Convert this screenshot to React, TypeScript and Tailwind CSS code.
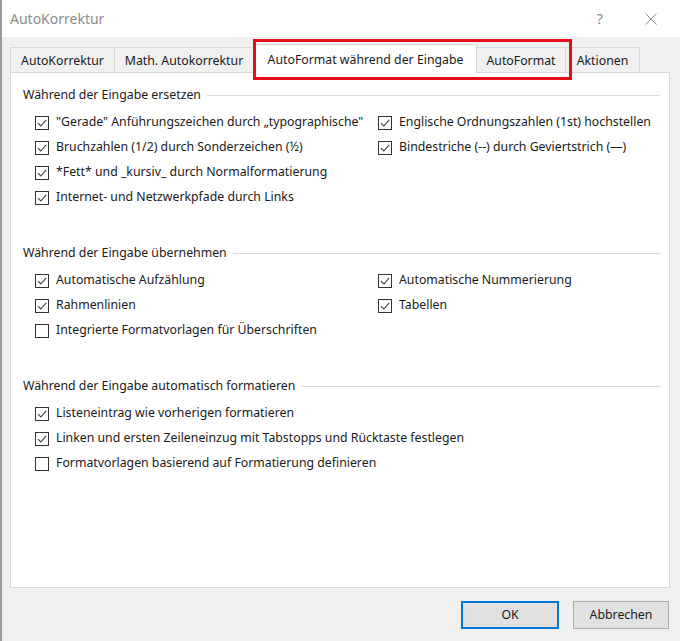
import React from 'react'

type Item = { label: string; checked: boolean }

const font = { fontFamily: '"Noto Sans", "Open Sans", Arial, sans-serif' }

const Check: React.FC<{ checked: boolean }> = ({ checked }) => (
  <span className="w-[14px] h-[14px] border border-[#333333] bg-white flex items-center justify-center shrink-0">
    {checked && (
      <svg width="12" height="12" viewBox="0 0 12 12" fill="none">
        <path d="M2 6.2 L4.8 9 L10.2 2.8" stroke="#3c3c3c" strokeWidth="1.1" />
      </svg>
    )}
  </span>
)

const Row: React.FC<Item> = ({ label, checked }) => (
  <div className="h-[25px] flex items-center gap-[7px] whitespace-nowrap">
    <Check checked={checked} />
    <span>{label}</span>
  </div>
)

const Section: React.FC<{ title: string; left: Item[]; right?: Item[] }> = ({ title, left, right = [] }) => (
  <div>
    <div className="flex items-center h-[16px] pl-[12px] pr-[9px]">
      <span className="whitespace-nowrap">{title}</span>
      <div className="flex-1 h-px bg-[#dcdcdc] ml-[6px]" />
    </div>
    <div className="grid grid-cols-[343px_1fr] pl-[24px] mt-[7px]">
      <div className="flex flex-col">
        {left.map((it) => (
          <Row key={it.label} {...it} />
        ))}
      </div>
      <div className="flex flex-col">
        {right.map((it) => (
          <Row key={it.label} {...it} />
        ))}
      </div>
    </div>
  </div>
)

const tabs = [
  { label: 'AutoKorrektur', w: 'w-[105px]' },
  { label: 'Math. Autokorrektur', w: 'w-[140px]' },
  { label: 'AutoFormat während der Eingabe', w: 'w-[223px]', active: true },
  { label: 'AutoFormat', w: 'w-[90px]' },
  { label: 'Aktionen', w: 'w-[75px]' },
]

export default function App() {
  return (
    <div
      className="w-[680px] h-[641px] bg-[#f0f0f0] border-l-2 border-[#9a9a9a] text-[12.3px] text-[#1a1a1a] flex flex-col relative overflow-hidden"
      style={font}
    >
      {/* Title bar */}
      <div className="h-[37px] bg-white flex items-center pl-[8px] shrink-0">
        <span className="text-[14px] text-[#8c8c8c]">AutoKorrektur</span>
        <span className="ml-auto text-[15px] text-[#8c8c8c] mr-[42px]">?</span>
        <svg width="12" height="12" viewBox="0 0 12 12" className="mr-[23px]">
          <path d="M0.5 0.5 L11.5 11.5 M11.5 0.5 L0.5 11.5" stroke="#8c8c8c" strokeWidth="1" />
        </svg>
      </div>

      {/* Tabs */}
      <div className="flex items-end h-[35px] pl-[8px] shrink-0 relative z-10">
        {tabs.map((t) =>
          t.active ? (
            <div
              key={t.label}
              className={`${t.w} h-[29px] bg-white border border-b-0 border-[#d9d9d9] flex items-center justify-center pt-[3px] -mb-px`}
            >
              {t.label}
            </div>
          ) : (
            <div
              key={t.label}
              className={`${t.w} h-[25px] bg-[#f0f0f0] border border-b-0 border-[#d9d9d9] -ml-px first:ml-0 flex items-center justify-center pt-[3px]`}
            >
              {t.label}
            </div>
          )
        )}
      </div>

      {/* Panel */}
      <div className="ml-[8px] mr-[10px] h-[516px] bg-white border border-[#d9d9d9] pt-[14px] flex flex-col gap-[35px]">
        <Section
          title="Während der Eingabe ersetzen"
          left={[
            { label: '"Gerade" Anführungszeichen durch „typographische"', checked: true },
            { label: 'Bruchzahlen (1/2) durch Sonderzeichen (½)', checked: true },
            { label: '*Fett* und _kursiv_ durch Normalformatierung', checked: true },
            { label: 'Internet- und Netzwerkpfade durch Links', checked: true },
          ]}
          right={[
            { label: 'Englische Ordnungszahlen (1st) hochstellen', checked: true },
            { label: 'Bindestriche (--) durch Geviertstrich (—)', checked: true },
          ]}
        />
        <Section
          title="Während der Eingabe übernehmen"
          left={[
            { label: 'Automatische Aufzählung', checked: true },
            { label: 'Rahmenlinien', checked: true },
            { label: 'Integrierte Formatvorlagen für Überschriften', checked: false },
          ]}
          right={[
            { label: 'Automatische Nummerierung', checked: true },
            { label: 'Tabellen', checked: true },
          ]}
        />
        <Section
          title="Während der Eingabe automatisch formatieren"
          left={[
            { label: 'Listeneintrag wie vorherigen formatieren', checked: true },
            { label: 'Linken und ersten Zeileneinzug mit Tabstopps und Rücktaste festlegen', checked: true },
            { label: 'Formatvorlagen basierend auf Formatierung definieren', checked: false },
          ]}
        />
      </div>

      {/* Buttons */}
      <div className="flex justify-end gap-[14px] pr-[11px] mt-[13px]">
        <button className="w-[98px] h-[28px] bg-[#e1e1e1] border-2 border-[#0078d7] flex items-center justify-center">
          OK
        </button>
        <button className="w-[96px] h-[28px] bg-[#e1e1e1] border border-[#adadad] flex items-center justify-center">
          Abbrechen
        </button>
      </div>

      {/* Highlight frame */}
      <div className="absolute left-[251px] top-[39px] w-[319px] h-[41px] border-[3px] border-[#e3101a] z-20 pointer-events-none" />
    </div>
  )
}
